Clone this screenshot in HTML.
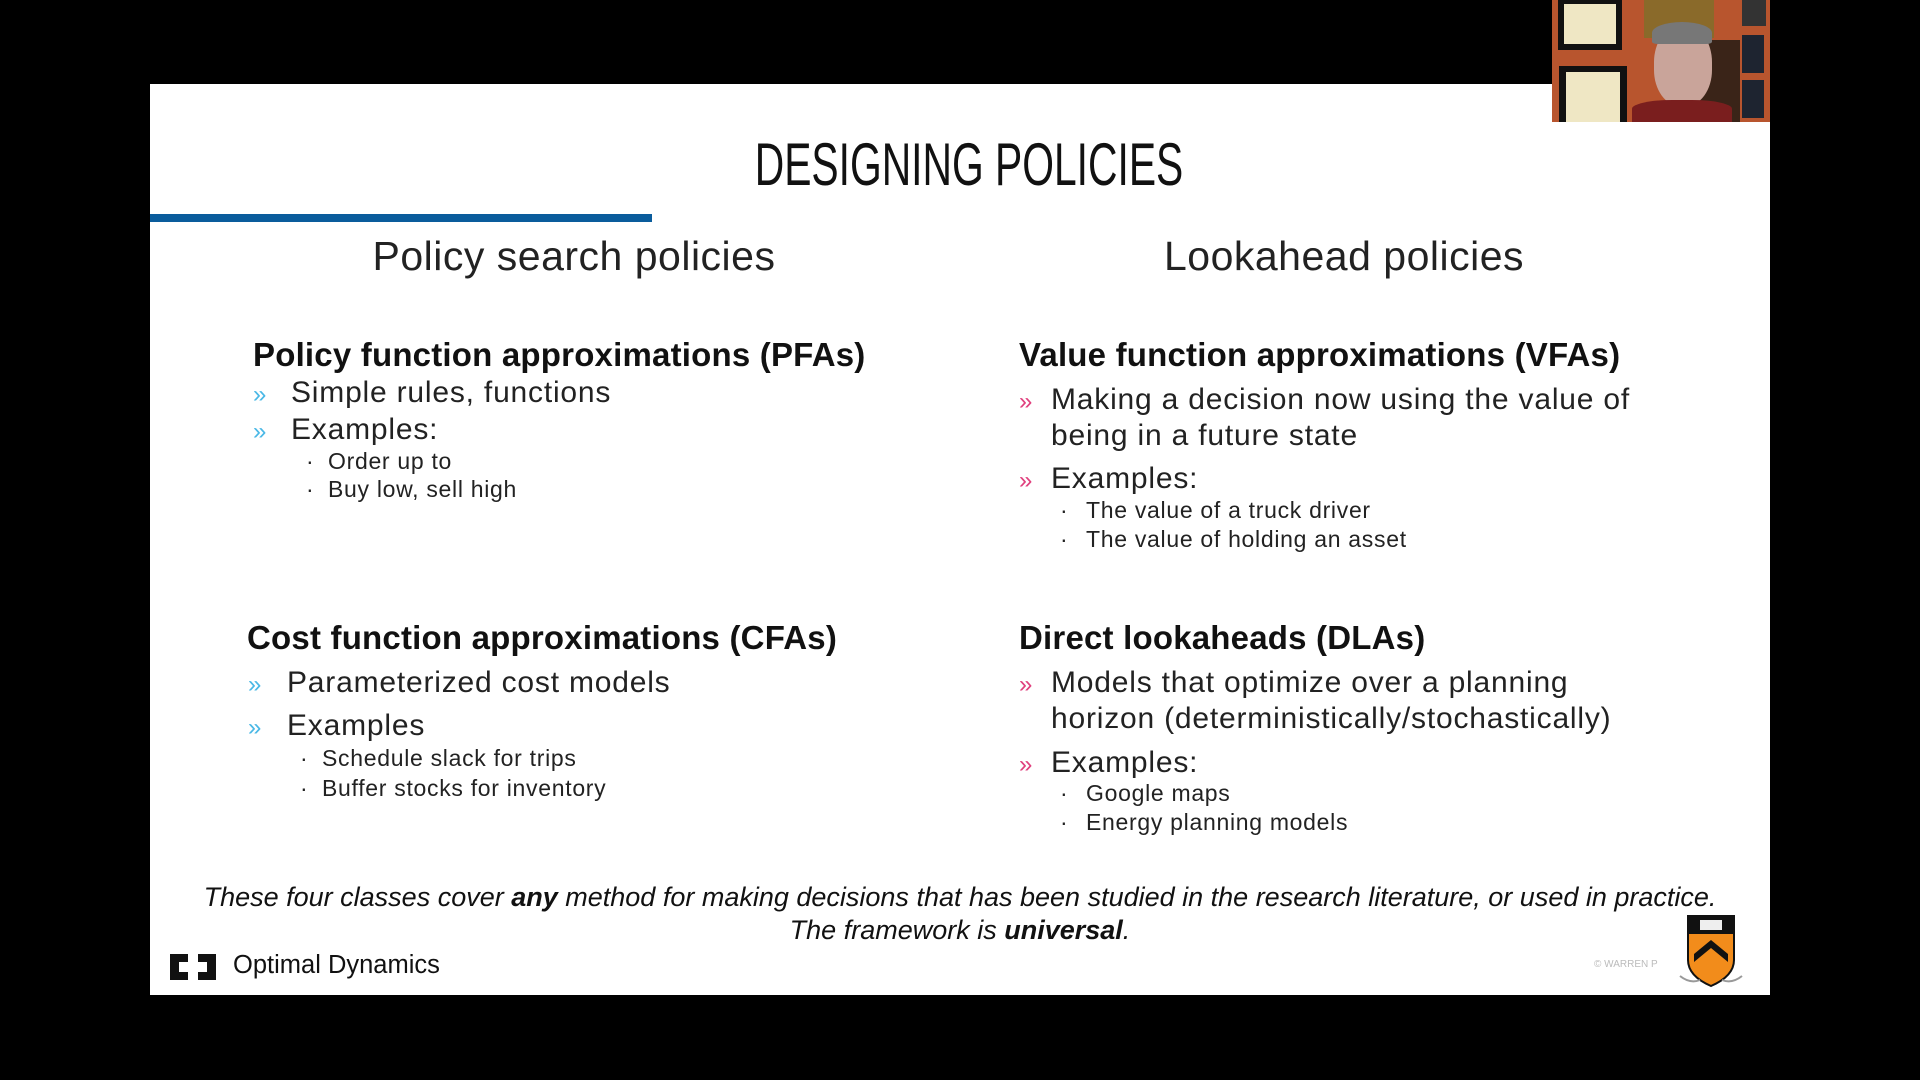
<!DOCTYPE html>
<html><head><meta charset="utf-8"><style>
*{margin:0;padding:0;box-sizing:border-box}
body{width:1920px;height:1080px;background:#000;position:relative;overflow:hidden;font-family:"Liberation Sans",sans-serif;color:#111}
.slide{position:absolute;left:150px;top:84px;width:1620px;height:911px;background:#fff}
.a{position:absolute;white-space:nowrap;line-height:1}
.h{font-weight:bold;font-size:33px;color:#111;letter-spacing:0.2px}
.b{font-size:30px;color:#222;letter-spacing:0.8px}
.s{font-size:23px;color:#222;letter-spacing:0.7px}
.cy{color:#4ab8e6;font-size:24px}
.pk{color:#e0407e;font-size:24px}
</style></head><body>
<div class="slide"></div>
<!-- video -->
<div style="position:absolute;left:1552px;top:0;width:218px;height:122px;background:#b8552e;overflow:hidden">
 <div style="position:absolute;left:6px;top:0;width:64px;height:50px;background:#111"></div>
 <div style="position:absolute;left:12px;top:4px;width:52px;height:40px;background:#efe7c4"></div>
 <div style="position:absolute;left:7px;top:66px;width:68px;height:56px;background:#111"></div>
 <div style="position:absolute;left:14px;top:72px;width:54px;height:50px;background:#efe7c4"></div>
 <div style="position:absolute;left:92px;top:0;width:70px;height:38px;background:#8a6a2a"></div>
 <div style="position:absolute;left:143px;top:40px;width:45px;height:82px;background:#3a2418"></div>
 <div style="position:absolute;left:190px;top:0;width:24px;height:26px;background:#333"></div>
 <div style="position:absolute;left:190px;top:35px;width:22px;height:38px;background:#1e2430"></div>
 <div style="position:absolute;left:190px;top:80px;width:22px;height:38px;background:#1e2430"></div>
 <div style="position:absolute;left:102px;top:26px;width:58px;height:80px;background:#c9a49a;border-radius:45%"></div>
 <div style="position:absolute;left:100px;top:22px;width:60px;height:22px;background:#777;border-radius:50% 50% 10% 10%"></div>
 <div style="position:absolute;left:80px;top:100px;width:100px;height:22px;background:#7a1e1e;border-radius:40% 40% 0 0"></div>
</div>
<div class="a" style="left:0;width:1938px;text-align:center;top:135px;font-family:'Liberation Sans Narrow','Liberation Sans',sans-serif;font-size:60px;transform:scaleX(0.68);transform-origin:969px 0;color:#111">DESIGNING POLICIES</div>
<div style="position:absolute;left:150px;top:214px;width:502px;height:8px;background:#0a5c9c"></div>
<div class="a" style="left:274px;top:236px;font-size:41px;color:#222;width:600px;text-align:center;letter-spacing:0.5px">Policy search policies</div>
<div class="a" style="left:1044px;top:236px;font-size:41px;color:#222;width:600px;text-align:center;letter-spacing:0.5px">Lookahead policies</div>

<div class="a h" style="left:253px;top:338px">Policy function approximations (PFAs)</div>
<div class="a cy" style="left:253px;top:383px">»</div><div class="a b" style="left:291px;top:378px">Simple rules, functions</div>
<div class="a cy" style="left:253px;top:420px">»</div><div class="a b" style="left:291px;top:415px">Examples:</div>
<div class="a s" style="left:306px;top:450px">·</div><div class="a s" style="left:328px;top:450px">Order up to</div>
<div class="a s" style="left:306px;top:478px">·</div><div class="a s" style="left:328px;top:478px">Buy low, sell high</div>

<div class="a h" style="left:247px;top:621px">Cost function approximations (CFAs)</div>
<div class="a cy" style="left:248px;top:673px">»</div><div class="a b" style="left:287px;top:668px">Parameterized cost models</div>
<div class="a cy" style="left:248px;top:716px">»</div><div class="a b" style="left:287px;top:711px">Examples</div>
<div class="a s" style="left:300px;top:747px">·</div><div class="a s" style="left:322px;top:747px">Schedule slack for trips</div>
<div class="a s" style="left:300px;top:777px">·</div><div class="a s" style="left:322px;top:777px">Buffer stocks for inventory</div>

<div class="a h" style="left:1019px;top:338px">Value function approximations (VFAs)</div>
<div class="a pk" style="left:1019px;top:390px">»</div><div class="a b" style="left:1051px;top:385px">Making a decision now using the value of</div>
<div class="a b" style="left:1051px;top:421px">being in a future state</div>
<div class="a pk" style="left:1019px;top:469px">»</div><div class="a b" style="left:1051px;top:464px">Examples:</div>
<div class="a s" style="left:1060px;top:499px">·</div><div class="a s" style="left:1086px;top:499px">The value of a truck driver</div>
<div class="a s" style="left:1060px;top:528px">·</div><div class="a s" style="left:1086px;top:528px">The value of holding an asset</div>

<div class="a h" style="left:1019px;top:621px">Direct lookaheads (DLAs)</div>
<div class="a pk" style="left:1019px;top:673px">»</div><div class="a b" style="left:1051px;top:668px">Models that optimize over a planning</div>
<div class="a b" style="left:1051px;top:704px">horizon (deterministically/stochastically)</div>
<div class="a pk" style="left:1019px;top:753px">»</div><div class="a b" style="left:1051px;top:748px">Examples:</div>
<div class="a s" style="left:1060px;top:782px">·</div><div class="a s" style="left:1086px;top:782px">Google maps</div>
<div class="a s" style="left:1060px;top:811px">·</div><div class="a s" style="left:1086px;top:811px">Energy planning models</div>

<div class="a" style="left:150px;width:1620px;text-align:center;top:884px;font-size:27px;font-style:italic;color:#111">These four classes cover <b>any</b> method for making decisions that has been studied in the research literature, or used in practice.</div>
<div class="a" style="left:150px;width:1620px;text-align:center;top:917px;font-size:27px;font-style:italic;color:#111">The framework is <b>universal</b>.</div>

<svg style="position:absolute;left:170px;top:954px" width="46" height="26" viewBox="0 0 46 26"><path d="M0 0h18v8h-9v10h9v8H0z" fill="#111"/><path d="M46 0H28v8h9v10h-9v8h18z" fill="#111"/></svg>
<div class="a" style="left:233px;top:953px;font-size:25.5px;color:#111">Optimal Dynamics</div>
<div class="a" style="left:1594px;top:960px;font-size:10px;color:#bbb">© WARREN P</div>
<svg style="position:absolute;left:1676px;top:910px" width="70" height="80" viewBox="0 0 70 80">
<path d="M12 6h46v44q0 16-23 26q-23-10-23-26z" fill="#f28c1b" stroke="#111" stroke-width="2"/>
<path d="M12 6h46v18H12z" fill="#111"/>
<rect x="24" y="10" width="22" height="10" fill="#eee"/>
<path d="M18 44l17-14l17 14v8l-17-14l-17 14z" fill="#111"/>
<path d="M4 66q10 8 20 4M66 66q-10 8-20 4" stroke="#999" fill="none" stroke-width="2"/>
</svg>
</body></html>
